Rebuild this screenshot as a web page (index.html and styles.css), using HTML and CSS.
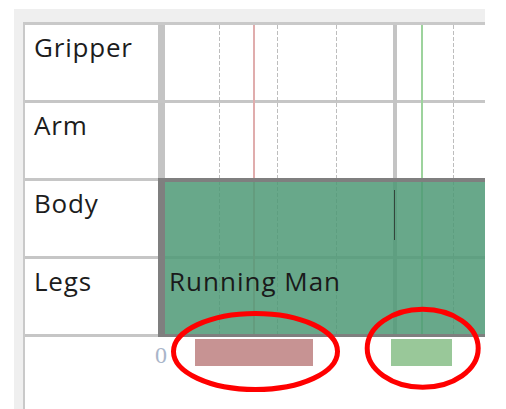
FILE: index.html
```html
<!DOCTYPE html>
<html>
<head>
<meta charset="utf-8">
<title>Timeline</title>
<link rel="stylesheet" href="styles.css">
</head>
<body>
<div class="panel">
  <div class="grid">
    <div class="row"><div class="label">Gripper</div><div class="track"></div></div>
    <div class="row"><div class="label">Arm</div><div class="track"></div></div>
    <div class="row"><div class="label">Body</div><div class="track"></div></div>
    <div class="row"><div class="label">Legs</div><div class="track"></div></div>
    <div class="axis">
      <span class="axis-zero">0</span>
      <div class="range range-red"></div>
      <div class="range range-green"></div>
    </div>
    <div class="ticks">
      <i class="tick dashed t1"></i>
      <i class="tick dashed t2"></i>
      <i class="tick dashed t3"></i>
      <i class="tick major t4"></i>
      <i class="tick dashed t5"></i>
      <i class="marker marker-red"></i>
      <i class="marker marker-green"></i>
    </div>
    <div class="clip"><div class="clip-name">Running Man</div></div>
    <i class="cursor"></i>
  </div>
</div>
<svg class="annotations" width="506" height="409" viewBox="0 0 506 409">
  <ellipse cx="255.5" cy="351.5" rx="82" ry="38" fill="none" stroke="#ff0000" stroke-width="5"/>
  <ellipse cx="422.7" cy="348.3" rx="55.5" ry="39" fill="none" stroke="#ff0000" stroke-width="5"/>
</svg>
</body>
</html>
```

FILE: styles.css
```css
html, body {
  margin: 0;
  padding: 0;
  background: #ffffff;
}

body {
  position: relative;
  width: 506px;
  height: 409px;
  overflow: hidden;
  font-family: "Open Sans", "Noto Sans", sans-serif;
}

.panel {
  margin: 9px 0 0 14px;
  width: 471px;
  height: 400px;
  padding: 13px 0 0 9px;
  box-sizing: border-box;
  background: #efefef;
  overflow: hidden;
}

.grid {
  position: relative;
  height: 100%;
  background: #ffffff;
  border-top: 3px solid #c9c9c9;
  border-left: 2px solid #c9c9c9;
  box-sizing: border-box;
}

.row {
  display: flex;
  height: 75px;
  border-bottom: 3px solid #c6c6c6;
}

.label {
  width: 140px;
  flex: none;
  box-sizing: border-box;
  border-right: 7px solid #c4c4c4;
  padding: 6px 0 0 9px;
  font-size: 26px;
  font-weight: 500;
  letter-spacing: 0.8px;
  line-height: 32px;
  color: #1c1c1c;
}

.track {
  flex: 1;
}

.axis {
  position: relative;
  height: 80px;
}

.axis-zero {
  position: absolute;
  left: 130px;
  top: 5px;
  font-family: "Liberation Serif", serif;
  font-size: 24px;
  line-height: 27px;
  color: #a9b5c9;
}

.range {
  position: absolute;
  top: 2px;
  height: 27px;
}

.range-red {
  left: 170px;
  width: 118px;
  background: #c79393;
}

.range-green {
  left: 366px;
  width: 61px;
  background: #99c899;
}

.ticks {
  position: absolute;
  left: 0;
  top: 0;
  right: 0;
  height: 312px;
}

.tick, .marker {
  position: absolute;
  top: 0;
  bottom: 0;
}

.dashed {
  width: 1px;
  background: repeating-linear-gradient(to bottom, #bdbdbd 0 4px, transparent 4px 6px);
}

.major {
  width: 4px;
  background: #c4c4c4;
}

.t1 { left: 194px; }
.t2 { left: 252px; }
.t3 { left: 311px; }
.t4 { left: 368px; }
.t5 { left: 428px; }

.marker-red {
  left: 228px;
  width: 2px;
  background: #e0adad;
}

.marker-green {
  left: 396px;
  width: 2px;
  background: #9dd39d;
}

.clip {
  position: absolute;
  left: 133px;
  top: 153px;
  right: 0;
  height: 159px;
  box-sizing: border-box;
  border-top: 4px solid #7f7f7f;
  border-left: 7px solid #7f7f7f;
  border-bottom: 3px solid #7f7f7f;
  background: rgba(77, 153, 117, 0.85);
}

.clip-name {
  padding: 83px 0 0 4px;
  font-size: 26px;
  font-weight: 500;
  letter-spacing: 1px;
  line-height: 32px;
  color: #1a1a1a;
  white-space: nowrap;
}

.cursor {
  position: absolute;
  left: 369px;
  top: 165px;
  width: 1px;
  height: 50px;
  background: #33443b;
}

.annotations {
  position: absolute;
  left: 0;
  top: 0;
  pointer-events: none;
}
```
